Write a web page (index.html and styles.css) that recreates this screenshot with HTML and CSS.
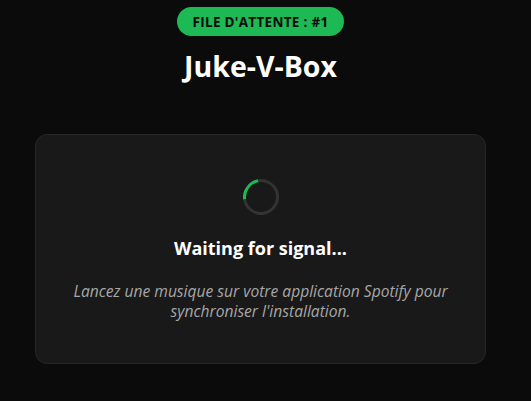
FILE: index.html
```html
<!DOCTYPE html>
<html lang="fr">
<head>
<meta charset="utf-8">
<title>Juke-V-Box</title>
<link rel="stylesheet" href="styles.css">
</head>
<body>
<main class="page">
  <div class="badge">FILE D'ATTENTE : #1</div>
  <h1 class="title">Juke-V-Box</h1>
  <section class="card">
    <div class="spinner"></div>
    <h2 class="card-title">Waiting for signal...</h2>
    <p class="card-text">Lancez une musique sur votre application Spotify pour synchroniser l'installation.</p>
  </section>
</main>
</body>
</html>
```

FILE: styles.css
```css
html, body {
  margin: 0;
  padding: 0;
  background: #0b0b0b;
  height: 100%;
  overflow: hidden;
}

body {
  font-family: "Open Sans", "Noto Sans", sans-serif;
  color: #ffffff;
}

.page {
  display: flex;
  flex-direction: column;
  align-items: center;
  padding: 7px 10px 0 0;
}

.badge {
  height: 29px;
  display: flex;
  align-items: center;
  padding: 0 15px;
  background: #1db954;
  color: #0b0b0b;
  border-radius: 15px;
  font-size: 13.5px;
  font-weight: 700;
  letter-spacing: 0.3px;
}

.title {
  margin: 10px 0 0;
  font-size: 28.5px;
  font-weight: 700;
  line-height: 40px;
}

.card {
  margin-top: 48px;
  width: 451px;
  box-sizing: border-box;
  height: 230px;
  background: #191919;
  border: 1px solid #262626;
  border-radius: 12px;
  display: flex;
  flex-direction: column;
  align-items: center;
  padding: 44px 30px 0;
}

.spinner {
  width: 36px;
  height: 36px;
  box-sizing: border-box;
  border-radius: 50%;
  border: 3px solid #333333;
  border-top-color: #1db954;
  transform: rotate(-54deg);
}

.card-title {
  margin: 21px 0 0;
  font-size: 18px;
  font-weight: 700;
  line-height: 24px;
}

.card-text {
  margin: 21px 0 0;
  font-size: 15.6px;
  font-style: italic;
  color: #a7a7a7;
  line-height: 20px;
  text-align: center;
}
```
